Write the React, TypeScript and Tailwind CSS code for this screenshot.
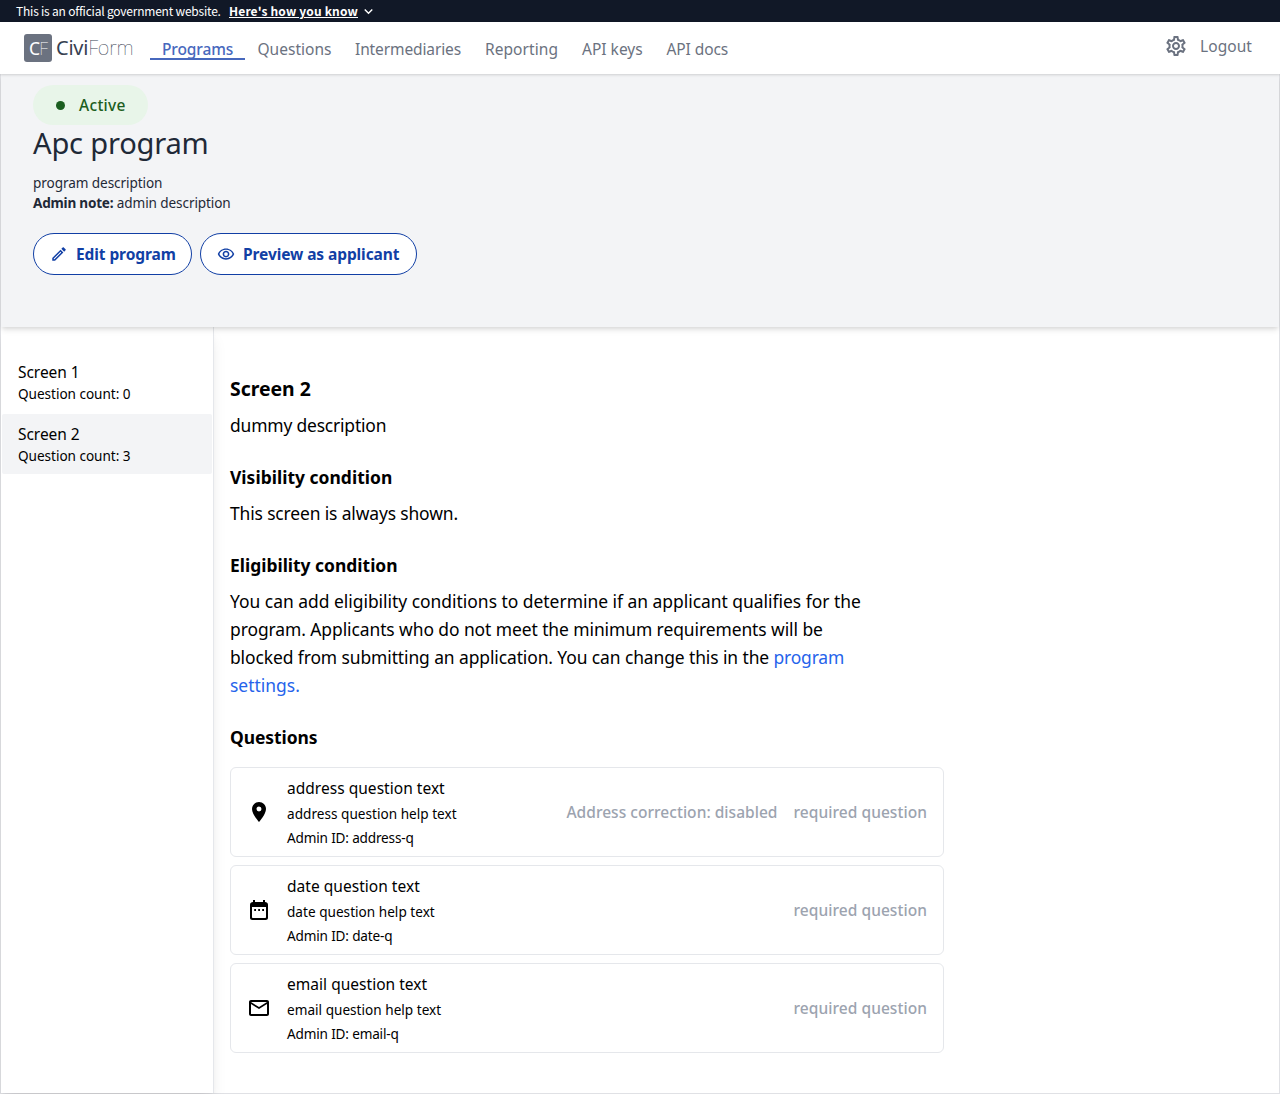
import type { ReactNode } from "react";
import {
  MdKeyboardArrowDown,
  MdMailOutline,
  MdOutlineEdit,
  MdOutlineRemoveRedEye,
  MdOutlineSettings,
  MdPlace,
} from "react-icons/md";

const navItems = [
  { label: "Programs", className: "w-[95px] pl-3 tracking-[-0.12px] font-medium text-[#4768bd] border-[#4768bd]" },
  { label: "Questions", className: "w-[98px] pl-[12.5px] border-transparent" },
  { label: "Intermediaries", className: "w-[130px] pl-3 tracking-[-0.12px] border-transparent" },
  { label: "Reporting", className: "w-[97px] pl-3 tracking-[0.06px] border-transparent" },
  { label: "API keys", className: "w-[84.5px] pl-3 border-transparent" },
  { label: "API docs", className: "w-[86px] pl-3 tracking-[-0.1px] border-transparent" },
];

function CalendarIcon() {
  return (
    <svg width="24" height="24" viewBox="0 0 24 24" fill="currentColor">
      <path
        fillRule="evenodd"
        d="M6 2h2v2h8V2h2v2.1c1.7 0 3 1 3 2.6V19.7c0 1.3-1 2.3-2.3 2.3H5.3C4 22 3 21 3 19.7V6.7C3 5.1 4.3 4.1 6 4.1zM5 9v10.3c0 .4.3.7.7.7h12.6c.4 0 .7-.3.7-.7V9z"
      />
      <path d="M7.2 11.1H9v1.8H7.2zm4 0H13v1.8h-1.8zm4 0H17v1.8h-1.8z" />
    </svg>
  );
}

const questions = [
  { name: "address", icon: <MdPlace size={24} />, correction: true },
  { name: "date", icon: <CalendarIcon />, correction: false },
  { name: "email", icon: <MdMailOutline size={24} />, correction: false },
];

function Banner() {
  return (
    <div className="flex h-[22px] items-center bg-[#111827] pl-4 font-['Noto_Sans_CJK_JP',sans-serif] text-[12px] leading-[16px] whitespace-nowrap text-white">
      <span className="w-[213px] tracking-[-0.21px]">This is an official government website.</span>
      <span className="tracking-[0.16px] font-bold underline">Here's how you know</span>
      <MdKeyboardArrowDown size={17} className="ml-[1.5px]" />
    </div>
  );
}

function Logo() {
  return (
    <div className="mt-3 ml-6 flex h-7 w-[126px] items-center whitespace-nowrap">
      <div className="flex size-7 items-center justify-center rounded-[3px] bg-[#6b7280] text-[17.5px] tracking-[-0.8px] text-white">
        <span>C</span>
        <span className="font-thin">F</span>
      </div>
      <div className="ml-1 text-[20px] leading-7 tracking-[-0.22px] text-[#374151]">
        Civi<span className="font-thin">Form</span>
      </div>
    </div>
  );
}

function NavBar() {
  return (
    <header className="relative z-20 flex h-[52px] bg-white text-[15.52px] leading-6 text-[#6b7280] shadow-[0_1px_3px_0_rgba(0,0,0,0.1),0_1px_2px_0_rgba(0,0,0,0.06)]">
      <Logo />
      <nav className="mt-[15px] flex">
        {navItems.map((item) => (
          <a key={item.label} className={`h-[23px] border-b-2 leading-6 whitespace-nowrap ${item.className}`}>
            {item.label}
          </a>
        ))}
      </nav>
      <div className="mt-3 mr-7 ml-auto flex h-6 items-center gap-3">
        <MdOutlineSettings size={24} />
        <span className="w-[52px] tracking-[0.06px]">Logout</span>
      </div>
    </header>
  );
}

function PillButton({ icon, children, className }: { icon: ReactNode; children: ReactNode; className: string }) {
  return (
    <button
      className={`flex h-[42px] items-center rounded-full border border-[#113fa5] bg-white pl-4 text-[15.52px] font-bold tracking-[-0.1px] whitespace-nowrap text-[#113fa5] ${className}`}
    >
      {icon}
      <span className="ml-2 pt-0.5">{children}</span>
    </button>
  );
}

function ProgramHeader() {
  return (
    <section className="relative z-10 h-[253px] bg-[#f3f4f6] pt-[11px] pl-8 text-[#1f2937] shadow-[0_4px_6px_-1px_rgba(0,0,0,0.1),0_2px_4px_-1px_rgba(0,0,0,0.08)]">
      <div className="flex h-10 w-[115px] items-center rounded-full bg-[#e8f5e9] pl-[23px] text-[15.52px] font-medium tracking-[0.3px] text-[#1b5e20]">
        <span className="mr-3.5 size-[9px] rounded-full bg-[#1b5e20]" />
        <span className="pt-0.5">Active</span>
      </div>
      <h1 className="text-[29.1px] leading-9 tracking-[-0.2px]">Apc program</h1>
      <p className="mt-3 text-[13.58px] leading-5 tracking-[-0.08px]">program description</p>
      <p className="text-[13.58px] leading-5 tracking-[-0.1px]">
        <b className="tracking-[-0.22px]">Admin note:</b> admin description
      </p>
      <div className="mt-5 flex gap-2">
        <PillButton icon={<MdOutlineEdit size={18} />} className="w-[159px]">
          Edit program
        </PillButton>
        <PillButton icon={<MdOutlineRemoveRedEye size={18} />} className="w-[217px]">
          Preview as applicant
        </PillButton>
      </div>
    </section>
  );
}

function ScreenLink({ title, count, className }: { title: string; count: number; className: string }) {
  return (
    <a className={`block h-[60px] rounded-[2px] pt-2 pl-4 ${className}`}>
      <div className="text-[15.52px] leading-6 tracking-[-0.05px]">{title}</div>
      <div className="text-[13.58px] leading-5 tracking-[-0.03px]">Question count: {count}</div>
    </a>
  );
}

function QuestionCard({ name, icon, correction }: { name: string; icon: ReactNode; correction: boolean }) {
  return (
    <div className="flex h-[90px] items-center rounded-md border border-[#e5e7eb] px-4">
      {icon}
      <div className="ml-4 pt-0.5 text-[13.58px] leading-6 tracking-[0.02px]">
        <div className="mb-0.5 text-[15.52px]">{name} question text</div>
        <div>{name} question help text</div>
        <div className="tracking-[-0.17px]">Admin ID: {name}-q</div>
      </div>
      <div className="ml-auto flex gap-4 text-[15.52px] font-medium text-[#9ca3af]">
        {correction && <span className="tracking-[0.03px]">Address correction: disabled</span>}
        <span className="tracking-[0.05px]">required question</span>
      </div>
    </div>
  );
}

export default function App() {
  return (
    <div className="flex h-[1094px] flex-col overflow-hidden bg-white font-['Noto_Sans',sans-serif] text-black">
      <Banner />
      <NavBar />
      <div className="flex min-h-0 flex-1 flex-col border-x border-b border-[#e0e1e5]">
        <ProgramHeader />
        <div className="flex flex-1">
          <aside className="w-[213px] border-r border-[#e5e7eb] px-px pt-[25px] shadow-[0_10px_15px_-3px_rgba(0,0,0,0.1),0_4px_6px_-2px_rgba(0,0,0,0.05)]">
            <ScreenLink title="Screen 1" count={0} className="mb-0.5" />
            <ScreenLink title="Screen 2" count={3} className="bg-[#f3f4f6]" />
          </aside>
          <main className="w-[730px] pt-12 pl-4 text-[17.46px] leading-7 whitespace-nowrap">
            <h2 className="text-[19.4px] leading-7 font-bold">Screen 2</h2>
            <p className="mt-2 tracking-[-0.18px]">dummy description</p>
            <h3 className="mt-6 font-bold tracking-[0.03px]">Visibility condition</h3>
            <p className="mt-2 tracking-[-0.14px]">This screen is always shown.</p>
            <h3 className="mt-6 font-bold">Eligibility condition</h3>
            <p className="mt-2">
              <span className="tracking-[-0.015px]">
                You can add eligibility conditions to determine if an applicant qualifies for the
              </span>
              <br />
              <span className="tracking-[-0.08px]">
                program. Applicants who do not meet the minimum requirements will be
              </span>
              <br />
              <span className="tracking-[-0.1px]">
                blocked from submitting an application. You can change this in the{" "}
                <a className="tracking-[-0.18px] text-[#2563eb]">program</a>
              </span>
              <br />
              <a className="text-[#2563eb]">settings.</a>
            </p>
            <h3 className="mt-6 mb-4 font-bold tracking-[-0.06px]">Questions</h3>
            <div className="flex flex-col gap-2">
              {questions.map((q) => (
                <QuestionCard key={q.name} {...q} />
              ))}
            </div>
          </main>
        </div>
      </div>
    </div>
  );
}
